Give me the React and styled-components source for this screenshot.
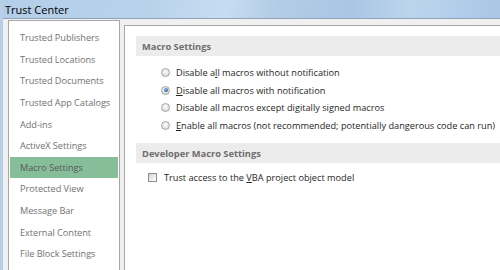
import React from "react";
import styled, { createGlobalStyle } from "styled-components";

const GlobalStyle = createGlobalStyle`
  html, body { margin: 0; padding: 0; }
  body {
    width: 500px;
    height: 270px;
    overflow: hidden;
    background: #f0f0f0;
    font-family: "Open Sans", "Noto Sans", sans-serif;
  }
`;

const Window = styled.div`
  display: flex;
  flex-direction: column;
  width: 500px;
  height: 270px;
  box-sizing: border-box;
  border-left: 3px solid #b7d0ea;
  background: #f0f0f0;
  overflow: hidden;
`;

const TitleBar = styled.div`
  height: 19px;
  flex: none;
  display: flex;
  align-items: center;
  padding-left: 2px;
  box-sizing: border-box;
  border-bottom: 1px solid #8fa2b8;
  background: linear-gradient(
    100deg,
    #b4cde8 0%,
    #b9d2ec 30%,
    #c6dcf1 45%,
    #b3cbe6 55%,
    #aac6e4 70%,
    #bcd5ee 82%,
    #a9c6e5 100%
  );
  font-size: 11px;
  color: #000;
`;

const Body = styled.div`
  flex: 1;
  display: flex;
  gap: 4px;
  padding: 1px 0 0 5px;
  min-height: 0;
`;

const Nav = styled.ul`
  list-style: none;
  margin: 0;
  width: 112px;
  flex: none;
  box-sizing: border-box;
  padding: 6px 1px 0 1px;
  background: #fff;
  border: 1px solid #a8a8a8;
  border-bottom: none;
`;

const NavItem = styled.li`
  height: 21.6px;
  display: flex;
  align-items: center;
  padding-left: 10px;
  font-size: 9.2px;
  letter-spacing: -0.05px;
  color: ${(p) => (p.$active ? "#5a5a5a" : "#727272")};
  background: ${(p) => (p.$active ? "#86be9a" : "transparent")};
  white-space: nowrap;
`;

const Content = styled.div`
  flex: 1;
  margin-top: 5px;
  margin-right: -4px;
  background: #fff;
  border: 1px solid #a8a8a8;
  border-bottom: none;
  border-right: none;
  padding: 10px 0 0 11px;
  display: flex;
  flex-direction: column;
`;

const SectionHeader = styled.div`
  height: 20px;
  display: flex;
  align-items: center;
  padding-left: 6px;
  background: #ececec;
  font-size: 9.3px;
  font-weight: 700;
  color: #6e6e6e;
`;

const OptionList = styled.div`
  display: flex;
  flex-direction: column;
  padding: ${(p) => p.$pad};
`;

const Option = styled.label`
  height: 17.5px;
  display: flex;
  align-items: center;
  gap: ${(p) => p.$gap || "6px"};
  font-size: 9.2px;
  color: #262626;
  white-space: nowrap;
`;

const Radio = styled.span`
  width: 9px;
  height: 9px;
  border-radius: 50%;
  flex: none;
  box-sizing: border-box;
  border: 1px solid #a2a2a2;
  background: radial-gradient(circle at 50% 35%, #fbfbfb 0%, #e4e4e4 60%, #cfcfcf 100%);
  display: flex;
  align-items: center;
  justify-content: center;
  &::after {
    content: "";
    width: 4px;
    height: 4px;
    border-radius: 50%;
    background: ${(p) => (p.$checked ? "radial-gradient(circle at 40% 35%, #8fb4e6 0%, #2f5fa8 70%, #1d3f78 100%)" : "transparent")};
  }
`;

const Checkbox = styled.span`
  width: 9px;
  height: 9px;
  flex: none;
  box-sizing: border-box;
  border: 1px solid #8e8e8e;
  background: linear-gradient(135deg, #d4d4d4 0%, #efefef 60%, #ffffff 100%);
`;

const U = styled.span`
  text-decoration: underline;
  text-underline-offset: 1px;
`;

const Spacer = styled.div`
  height: ${(p) => p.$h}px;
  flex: none;
`;

const navItems = [
  "Trusted Publishers",
  "Trusted Locations",
  "Trusted Documents",
  "Trusted App Catalogs",
  "Add-ins",
  "ActiveX Settings",
  "Macro Settings",
  "Protected View",
  "Message Bar",
  "External Content",
  "File Block Settings",
];

export default function App() {
  return (
    <>
      <GlobalStyle />
      <Window>
        <TitleBar>Trust Center</TitleBar>
        <Body>
          <Nav>
            {navItems.map((n) => (
              <NavItem key={n} $active={n === "Macro Settings"}>
                {n}
              </NavItem>
            ))}
          </Nav>
          <Content>
            <SectionHeader>Macro Settings</SectionHeader>
            <OptionList $pad="8px 0 0 25px">
              <Option>
                <Radio />
                <span>
                  Disable a<U>l</U>l macros without notification
                </span>
              </Option>
              <Option>
                <Radio $checked />
                <span>
                  <U>D</U>isable all macros with notification
                </span>
              </Option>
              <Option>
                <Radio />
                <span>Disable all macros except di<U>g</U>itally signed macros</span>
              </Option>
              <Option>
                <Radio />
                <span>
                  <U>E</U>nable all macros (not recommended; potentially dangerous code can run)
                </span>
              </Option>
            </OptionList>
            <Spacer $h={9} />
            <SectionHeader>Developer Macro Settings</SectionHeader>
            <OptionList $pad="6px 0 0 12px">
              <Option $gap="7px">
                <Checkbox />
                <span>
                  Trust access to the <U>V</U>BA project object model
                </span>
              </Option>
            </OptionList>
          </Content>
        </Body>
      </Window>
    </>
  );
}
